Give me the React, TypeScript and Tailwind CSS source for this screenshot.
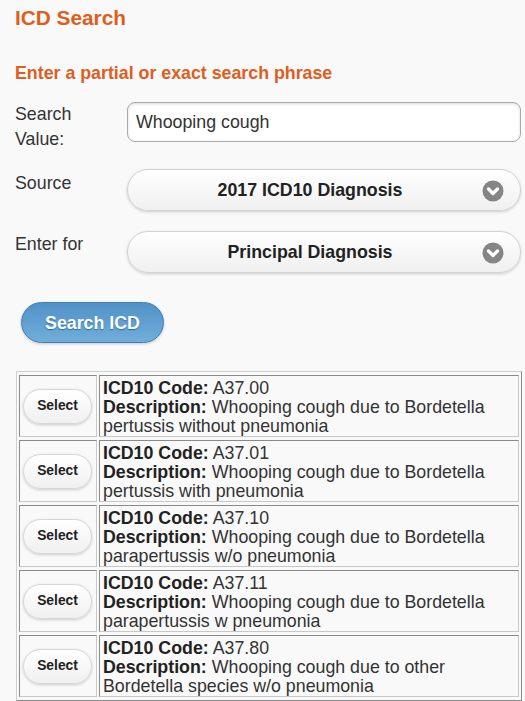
import React from "react";

type IcdRow = {
  code: string;
  description: string;
};

const results: IcdRow[] = [
  { code: "A37.00", description: "Whooping cough due to Bordetella pertussis without pneumonia" },
  { code: "A37.01", description: "Whooping cough due to Bordetella pertussis with pneumonia" },
  { code: "A37.10", description: "Whooping cough due to Bordetella parapertussis w/o pneumonia" },
  { code: "A37.11", description: "Whooping cough due to Bordetella parapertussis w pneumonia" },
  { code: "A37.80", description: "Whooping cough due to other Bordetella species w/o pneumonia" },
];

// Round grey badge with a white down-chevron, like the jQuery Mobile select arrow
function ChevronBadge() {
  return (
    <svg viewBox="0 0 22 22" className="w-[22px] h-[22px] shrink-0" aria-hidden="true">
      <circle cx="11" cy="11" r="10.5" fill="#858585" />
      <path
        d="M6.5 9 L11 13.5 L15.5 9"
        fill="none"
        stroke="#ffffff"
        strokeWidth="3.2"
        strokeLinecap="round"
        strokeLinejoin="round"
      />
    </svg>
  );
}

function SelectBox({ value }: { value: string }) {
  return (
    <button
      type="button"
      className="flex items-center gap-[5px] w-full h-[42px] pl-[15px] pr-[16px] pt-[1px] rounded-full border border-[#d2d2d2] bg-gradient-to-b from-[#ffffff] to-[#f0f0f0] shadow-[0_1px_3px_rgba(0,0,0,0.18)]"
    >
      <span className="flex-1 text-center text-[17.8px] font-bold text-[#222]">{value}</span>
      <ChevronBadge />
    </button>
  );
}

function FormRow({ label, children }: { label: React.ReactNode; children: React.ReactNode }) {
  return (
    <div className="flex items-start">
      <label className="w-[112px] shrink-0 text-[17.8px] leading-[25px] text-[#333]">{label}</label>
      <div className="flex-1 mr-[1px]">{children}</div>
    </div>
  );
}

export default function App() {
  const [query, setQuery] = React.useState("Whooping cough");

  return (
    <div className="min-h-screen bg-[#f9f9f9] pl-[15px] pr-[3px] font-['Liberation_Sans',Arial,sans-serif] text-[#333] overflow-hidden">
      <h2 className="pt-[6px] text-[20.8px] leading-[24px] font-bold text-[#e05d1e]">ICD Search</h2>

      <h3 className="mt-[32px] text-[17.8px] leading-[22px] font-bold text-[#e05d1e]">
        Enter a partial or exact search phrase
      </h3>

      <div className="mt-[18px] flex flex-col">
        <FormRow
          label={
            <>
              Search
              <br />
              Value:
            </>
          }
        >
          <input
            type="text"
            value={query}
            onChange={(e) => setQuery(e.target.value)}
            className="w-full h-[40px] px-[8px] rounded-[8px] border border-[#a9a9a9] bg-white text-[17.8px] text-[#333] shadow-[inset_0_1px_3px_rgba(0,0,0,0.15)] outline-none"
          />
        </FormRow>

        <div className="mt-[17px]">
          <FormRow label={<span className="block pt-[2px]">Source</span>}>
            <SelectBox value="2017 ICD10 Diagnosis" />
          </FormRow>
        </div>

        <div className="mt-[20px]">
          <FormRow label={<span className="block pt-[1px]">Enter for</span>}>
            <SelectBox value="Principal Diagnosis" />
          </FormRow>
        </div>
      </div>

      <button
        type="button"
        className="mt-[29px] ml-[6px] w-[143px] h-[41px] pt-[2px] rounded-full border border-[#3f7db3] bg-gradient-to-b from-[#5291c6] to-[#70aedb] text-white text-[17.8px] font-bold [text-shadow:0_1px_1px_#2f6a9c] shadow-[0_1px_3px_rgba(0,0,0,0.2)]"
      >
        Search ICD
      </button>

      <table className="mt-[28px] ml-[1px] w-[506px] border-separate border-spacing-x-[2px] border-spacing-y-[3px] border border-t-[#cfcfcf] border-l-[#cfcfcf] border-r-[#8a8a8a] border-b-[#8a8a8a]">
        <tbody>
          {results.map((row) => (
            <tr key={row.code}>
              <td className="w-[78px] px-[3px] align-middle border border-t-[#8a8a8a] border-l-[#8a8a8a] border-r-[#c8c8c8] border-b-[#c8c8c8]">
                <button
                  type="button"
                  className="w-[69px] h-[35px] rounded-full border border-[#d6d6d6] bg-gradient-to-b from-[#ffffff] to-[#f0f0f0] text-[13.8px] font-bold text-[#222] shadow-[0_1px_3px_rgba(0,0,0,0.18)]"
                >
                  Select
                </button>
              </td>
              <td className="h-[62px] pl-[3px] pr-[2px] pt-[3px] pb-0 align-top text-[17.8px] leading-[19px] text-[#333] border border-t-[#8a8a8a] border-l-[#8a8a8a] border-r-[#c8c8c8] border-b-[#c8c8c8]">
                <b className="text-[#222]">ICD10 Code:</b> {row.code}
                <br />
                <b className="text-[#222]">Description:</b> {row.description}
              </td>
            </tr>
          ))}
        </tbody>
      </table>
    </div>
  );
}
